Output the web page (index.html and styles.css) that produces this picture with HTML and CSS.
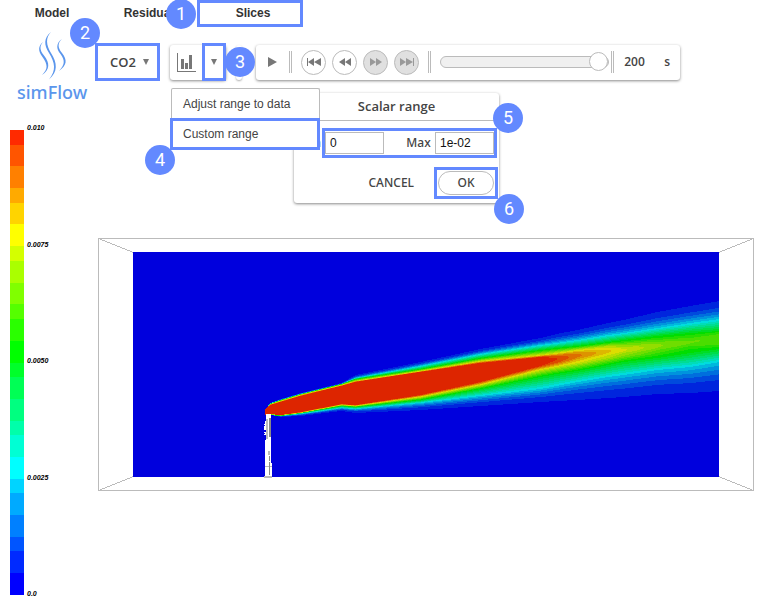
FILE: index.html
```html
<!DOCTYPE html>
<html lang="en">
<head>
<meta charset="utf-8">
<title>simFlow</title>
<link rel="stylesheet" href="styles.css">
</head>
<body>
<div class="app">
  <nav class="tabs">
    <a class="tab" href="#model">Model</a>
    <a class="tab" href="#residuals">Residuals</a>
    <a class="tab tab-current" href="#slices">Slices<span class="badge badge-1">1</span></a>
  </nav>

  <aside class="side">
    <div class="logo">
      <svg class="logo-mark" viewBox="0 0 30 48" aria-hidden="true">
        <path d="M13 0C5.500 6 6 13 11 21C17 31 18.500 38 11 47.500C20 40 19.500 31 13 21C8 12.500 7.500 6 13 0Z"/>
        <path d="M5 10C0 14 0 19 4.500 25C10 33 10 37 4 43C12 37.500 12 31 6 23.500C1.500 18 1.500 14 5 10Z"/>
        <path d="M24 7C18 11 18 17 22.500 22C27.500 29 26.500 33 21 39C29 33 29.500 28 24 21C19.500 15.500 19.500 11 24 7Z"/>
      </svg>
      <span class="logo-name">simFlow</span>
    </div>
    <div class="legend">
      <svg class="legend-bar" viewBox="0 0 14 465" preserveAspectRatio="none" shape-rendering="crispEdges" aria-hidden="true">
        <rect width="14" height="465" fill="#00f"/>
        <rect width="14" height="443" fill="#002aff"/>
        <rect width="14" height="421" fill="#0055ff"/>
        <rect width="14" height="407" fill="#0080ff"/>
        <rect width="14" height="385" fill="#00aaff"/>
        <rect width="14" height="363" fill="#00d4ff"/>
        <rect width="14" height="349" fill="#00ffff"/>
        <rect width="14" height="327" fill="#00ffd4"/>
        <rect width="14" height="305" fill="#00ffaa"/>
        <rect width="14" height="291" fill="#00ff80"/>
        <rect width="14" height="269" fill="#00ff55"/>
        <rect width="14" height="247" fill="#00ff2a"/>
        <rect width="14" height="233" fill="#00ff00"/>
        <rect width="14" height="211" fill="#2aff00"/>
        <rect width="14" height="189" fill="#55ff00"/>
        <rect width="14" height="174" fill="#80ff00"/>
        <rect width="14" height="153" fill="#aaff00"/>
        <rect width="14" height="131" fill="#d4ff00"/>
        <rect width="14" height="116" fill="#ffff00"/>
        <rect width="14" height="94" fill="#ffd400"/>
        <rect width="14" height="73" fill="#ffaa00"/>
        <rect width="14" height="58" fill="#ff8000"/>
        <rect width="14" height="36" fill="#ff5500"/>
        <rect width="14" height="15" fill="#ff2a00"/>
      </svg>
      <div class="legend-values">
        <span>0.010</span><span>0.0075</span><span>0.0050</span><span>0.0025</span><span>0.0</span>
      </div>
    </div>
  </aside>

  <main class="work">
    <div class="toolbar">
      <button class="field-button marked" type="button">CO2 <span class="arrow"></span><span class="badge badge-2">2</span></button>
      <div class="panel chart-group">
        <button class="chart-button" type="button" aria-label="Scalar bar">
          <svg width="19" height="19" viewBox="0 0 19 19" shape-rendering="crispEdges" aria-hidden="true">
            <path d="M0 0H1V18H19V19H0ZM4 6H7V16H4ZM8 10H11V16H8ZM12 2H15V16H12Z"/>
          </svg>
        </button>
        <button class="range-button marked" type="button" aria-label="Range options"><span class="arrow"></span></button>
      </div>
      <div class="grip"><span class="badge badge-3">3</span></div>
      <div class="panel player">
        <button class="play" type="button" aria-label="Play"><svg width="9" height="10" viewBox="0 0 9 10"><path d="M0 0L9 5L0 10Z"/></svg></button>
        <span class="rule"></span>
        <div class="steps">
          <button class="step" type="button" aria-label="First"><svg width="14" height="8" viewBox="0 0 14 8"><path d="M0 0H1V8H0ZM7 0V8L1 4ZM14 0V8L7 4Z"/></svg></button>
          <button class="step" type="button" aria-label="Previous"><svg width="12" height="8" viewBox="0 0 12 8"><path d="M6 0V8L0 4ZM12 0V8L6 4Z"/></svg></button>
          <button class="step step-off" type="button" aria-label="Next"><svg width="12" height="8" viewBox="0 0 12 8"><path d="M0 0V8L6 4ZM6 0V8L12 4Z"/></svg></button>
          <button class="step step-off" type="button" aria-label="Last"><svg width="14" height="8" viewBox="0 0 14 8"><path d="M0 0V8L6 4ZM6 0V8L13 4ZM13 0H14V8H13Z"/></svg></button>
        </div>
        <span class="rule"></span>
        <input class="timeline" type="range" min="0" max="200" value="200" aria-label="Time">
        <span class="rule"></span>
        <input class="time" id="time" type="text" value="200" aria-label="Time value">
        <label class="unit" for="time">s</label>
      </div>
    </div>

    <form class="dialog">
      <h2 class="dialog-title">Scalar range</h2>
      <div class="dialog-fields">
        <label for="min">Min</label>
        <div class="field-pair marked">
          <input class="number" id="min" type="text" value="0">
          <label for="max">Max</label>
          <input class="number" id="max" type="text" value="1e-02">
          <span class="badge badge-5">5</span>
        </div>
      </div>
      <div class="dialog-actions">
        <button class="cancel" type="button">CANCEL</button>
        <div class="ok-mark marked"><button class="ok" type="button">OK</button><span class="badge badge-6">6</span></div>
      </div>
    </form>

    <div class="menu">
      <button class="menu-item" type="button">Adjust range to data</button>
      <button class="menu-item marked" type="button">Custom range<span class="badge badge-4">4</span></button>
    </div>

    <svg class="scene" viewBox="98 238 656 253" shape-rendering="crispEdges" role="img" aria-label="CO2 concentration slice">
      <path class="wire" d="M98.500 238.500H753.500V490.500H98.500ZM98.500 238.500L133.500 252.500M753.500 238.500L718.500 252.500M98.500 490.500L133.500 476.500M753.500 490.500L718.500 476.500"/>
      <rect x="133" y="252" width="586" height="225" fill="#0000dd"/>
      <g id="plume"></g>
      <path fill="#fff" d="M266 414H271V463H272V477H265V440H266V435H264V432H266V430H264V424H265V421H266Z"/>
      <path fill="#bbb" d="M266 419H268V439H266ZM268 451H270V455H268ZM265 466H272V467H265ZM264 476H272V478H264Z"/>
      <path fill="#888" d="M269 418H271V437H269ZM269 456H270V461H269ZM269 462H270V475H269Z"/>
      <path fill="#0000dd" d="M264 425H265V426H264ZM264 433H265V434H264Z"/>
    </svg>
  </main>
</div>
<script src="plume.js"></script>
</body>
</html>
```

FILE: plume.js
```js
// Cross-sections of the plume. Each section is an x position followed by
// [y, level] points from the upper edge, through the core, to the lower edge.
const sections = [
  [265, [[409, 1], [409, 6], [409, 12], [409, 18], [409, 23], [412, 24], [415, 23], [415, 18], [415, 12], [415, 6], [415, 1]]],
  [270, [[403, 1], [403, 6], [404, 12], [404, 18], [405, 23], [409, 24], [414, 23], [414, 18], [415, 12], [415, 6], [415, 1]]],
  [280, [[399, 1], [400, 6], [400, 12], [401, 18], [402, 23], [409, 24], [415, 23], [415, 18], [416, 12], [416, 6], [417, 1]]],
  [300, [[393, 1], [394, 6], [394, 12], [395, 18], [396, 23], [404, 24], [412, 23], [413, 18], [413, 12], [414, 6], [416, 1]]],
  [341, [[383, 1], [384, 6], [384, 12], [385, 18], [386, 23], [395, 24], [404, 23], [405, 18], [406, 12], [408, 6], [411, 1]]],
  [355, [[375, 1], [378, 6], [379, 12], [381, 18], [382, 23], [393, 24], [405, 23], [406, 18], [407, 12], [409, 6], [413, 1]]],
  [420, [[362, 1], [366, 6], [369, 12], [371, 18], [372, 23], [383, 24], [395, 23], [397, 18], [400, 12], [403, 6], [410, 1]]],
  [480, [[349, 1], [354, 6], [358, 12], [361, 18], [363, 23], [372, 24], [382, 23], [385, 18], [389, 12], [396, 6], [406, 1]]],
  [540, [[338, 1], [345, 6], [350, 12], [355, 18], [357, 23], [361, 24], [366, 23], [370, 18], [377, 12], [389, 6], [402, 1]]],
  [556, [[334, 1], [343, 6], [348, 12], [353, 18], [356, 22], [359, 23.05], [363, 22], [367, 18], [374, 12], [386, 6], [401, 1]]],
  [577, [[330, 1], [340, 6], [346, 12], [350, 18], [352, 20], [356, 21.3], [359, 20], [363, 18], [371, 12], [382, 6], [400, 1]]],
  [608, [[323, 1], [335, 6], [342, 12], [346, 17], [348, 18], [351, 19.2], [355, 18], [358, 17], [365, 12], [377, 6], [398, 1]]],
  [623, [[320, 1], [333, 6], [340, 12], [345, 16], [347, 17], [350, 18.2], [353, 17], [356, 16], [362, 12], [375, 6], [397, 1]]],
  [657, [[312, 1], [328, 6], [336, 12], [340, 14], [342, 15], [346, 16.2], [350, 15], [353, 14], [358, 12], [370, 6], [394, 1]]],
  [690, [[306, 1], [323, 6], [333, 12], [335, 13], [338, 14], [342, 15.1], [346, 14], [349, 13], [353, 12], [367, 6], [393, 1]]],
  [719, [[301, 1], [319, 6], [331, 12], [332, 13], [334, 14], [338, 14.8], [345, 14], [347, 13], [349, 12], [362, 6], [391, 1]]]
];

function profileAt(x) {
  let i = 0;
  while (i < sections.length - 2 && sections[i + 1][0] < x) i++;
  const [xa, a] = sections[i];
  const [xb, b] = sections[i + 1];
  const t = (x - xa) / (xb - xa);
  return a.map((p, k) => [p[0] + (b[k][0] - p[0]) * t, p[1] + (b[k][1] - p[1]) * t]);
}

// The outermost levels spread out, and the core of the plume is rounded.
function crossing(outer, inner, level, isCore) {
  let t = (level - outer[1]) / (inner[1] - outer[1] || 1);
  if (outer[1] === 1) t = Math.pow(t, 0.6);
  if (isCore) t = 1 - Math.sqrt(1 - t);
  return outer[0] + (inner[0] - outer[0]) * t;
}

function spanAt(x, level) {
  const p = profileAt(x);
  const up = p.findIndex(q => q[1] >= level);
  if (up < 0) return null;
  let down = p.length - 1;
  while (p[down][1] < level) down--;
  const top = up === 0 ? p[0][0] : crossing(p[up - 1], p[up], level, up === 5);
  const bottom = down === p.length - 1 ? p[down][0] : crossing(p[down + 1], p[down], level, down === 5);
  return [Math.round(top), Math.round(bottom)];
}

function levelColor(level) {
  const s = Math.round(221 * (level % 6) / 6);
  if (level < 6) return `rgb(0,${s},221)`;
  if (level < 12) return `rgb(0,221,${221 - s})`;
  if (level < 18) return `rgb(${s},221,0)`;
  return `rgb(221,${Math.round(221 * (24 - level) / 6)},0)`;
}

const plume = document.getElementById("plume");
for (let level = 1; level <= 23; level++) {
  let d = "";
  for (let x = 265; x < 719; x++) {
    const span = spanAt(x, level);
    if (span && span[1] > span[0]) d += `M${x} ${span[0]}h1V${span[1]}h-1Z`;
  }
  const path = document.createElementNS("http://www.w3.org/2000/svg", "path");
  path.setAttribute("d", d);
  path.setAttribute("fill", levelColor(level));
  plume.appendChild(path);
}
```

FILE: styles.css
```css
* {
  box-sizing: border-box;
}

body {
  margin: 0;
  background: #fff;
  color: #444;
  font-family: "Liberation Sans", sans-serif;
  font-size: 12px;
}

button,
input {
  margin: 0;
  padding: 0;
  border: 0;
  background: none;
  color: inherit;
  font: inherit;
}

svg {
  display: block;
}

.app {
  display: grid;
  grid-template-columns: 95px 1fr;
  grid-template-rows: auto 1fr;
  min-height: 100vh;
}

.marked {
  position: relative;
  border: 3px solid #6389ff;
}

.badge {
  position: absolute;
  z-index: 5;
  display: grid;
  place-items: center;
  width: 30px;
  height: 30px;
  border-radius: 50%;
  background: #6389ff;
  color: #fff;
  font: 400 18px/30px Roboto, sans-serif;
}

/* Tabs */
.tabs {
  grid-column: 1 / -1;
  display: flex;
  height: 27px;
  padding-left: 2px;
}

.tab {
  width: 100px;
  color: #333;
  font-weight: 700;
  line-height: 26px;
  text-align: center;
  text-decoration: none;
}

.tab-current {
  position: relative;
  width: 106px;
  margin-left: -5px;
  border: 3px solid #6389ff;
  line-height: 20px;
  padding-left: 6px;
}

.badge-1 {
  top: -4px;
  left: -34px;
}

/* Logo and legend */
.side {
  display: flex;
  flex-direction: column;
  padding: 5px 0 7px 10px;
}

.logo {
  height: 98px;
  padding-left: 7px;
}

.logo-mark {
  width: 30px;
  height: 48px;
  margin-left: 21px;
  fill: #5b96ec;
}

.logo-name {
  display: block;
  color: #5b96ec;
  font: 500 18px/24px "Noto Sans", sans-serif;
}

.legend {
  display: flex;
  flex: 1;
  gap: 3px;
}

.legend-bar {
  width: 14px;
  height: 100%;
  min-height: 465px;
}

.legend-values {
  display: flex;
  flex-direction: column;
  justify-content: space-between;
  margin: -6px 0 -3px;
  color: #000;
  font: italic 700 7px/8px "Liberation Sans", sans-serif;
}

/* Toolbar */
.work {
  position: relative;
  padding: 16px 6px 0 0;
}

.toolbar {
  display: flex;
  align-items: center;
  height: 38px;
  margin-right: 74px;
}

.panel {
  display: flex;
  align-items: center;
  height: 35px;
  border-radius: 3px;
  background: #fff;
  box-shadow: 0 1px 3px #888;
}

.field-button {
  display: flex;
  align-items: center;
  justify-content: center;
  gap: 7px;
  width: 65px;
  height: 38px;
  padding-left: 4px;
  font: 600 13px/18px "Open Sans", sans-serif;
}

.arrow {
  border: 3px solid transparent;
  border-top: 6px solid #777;
  border-bottom: 0;
}

.badge-2 {
  top: -28px;
  left: -28px;
}

.chart-group {
  margin-left: 10px;
}

.chart-button {
  display: grid;
  place-items: center;
  width: 32px;
  height: 35px;
  fill: #777;
}

.range-button {
  display: grid;
  place-items: center;
  width: 24px;
  height: 38px;
}

.grip {
  position: relative;
  width: 6px;
  height: 35px;
  margin: 0 14px 0 10px;
  border-radius: 3px;
  box-shadow: 0 1px 2px #aaa;
}

.badge-3 {
  top: 2px;
  left: -11px;
}

.player {
  flex: 1;
  padding: 0 10px 0 12px;
}

.play {
  fill: #777;
  margin-right: 12px;
}

.rule {
  width: 3px;
  height: 22px;
  border: 1px solid #bbb;
  border-width: 0 1px;
}

.steps {
  display: flex;
  gap: 6px;
  margin: 0 9px;
}

.step {
  display: grid;
  place-items: center;
  width: 25px;
  height: 25px;
  border: 1px solid #bbb;
  border-radius: 50%;
  fill: #777;
}

.step-off {
  background: #e0e0e0;
  fill: #999;
}

.timeline {
  flex: 1;
  min-width: 0;
  height: 19px;
  margin: 0 2px 0 9px;
  appearance: none;
}

.timeline::-webkit-slider-runnable-track {
  height: 12px;
  border: 1px solid #bbb;
  border-radius: 6px;
  background: #f0f0f0;
}

.timeline::-webkit-slider-thumb {
  width: 19px;
  height: 19px;
  margin-top: -5px;
  border: 1px solid #bbb;
  border-radius: 50%;
  background: #fff;
  appearance: none;
}

.time {
  width: 40px;
  margin-left: 10px;
  font: 600 12px/18px "Open Sans", sans-serif;
}

.unit {
  font: 600 12px/18px "Open Sans", sans-serif;
}

/* Range menu */
.menu {
  position: absolute;
  z-index: 3;
  top: 61px;
  left: 76px;
  width: 149px;
  border: 1px solid #bbb;
  border-bottom: 0;
  border-radius: 2px;
  background: #fff;
}

.menu-item {
  display: block;
  width: 100%;
  height: 29px;
  padding-left: 11px;
  font-size: 12px;
  line-height: 28px;
  text-align: left;
}

.menu-item.marked {
  width: 150px;
  height: 32px;
  margin-left: -2px;
  padding-left: 10px;
  line-height: 26px;
}

.badge-4 {
  top: 24px;
  left: -28px;
}

/* Range dialog */
.dialog {
  position: absolute;
  z-index: 2;
  top: 66px;
  left: 199px;
  width: 205px;
  padding-bottom: 4px;
  border-radius: 3px;
  background: #fff;
  box-shadow: 0 1px 3px #888;
}

.dialog-title {
  margin: 0;
  border-bottom: 1px solid #bbb;
  font: 600 13px/27px "Open Sans", sans-serif;
  text-align: center;
}

.dialog-fields {
  display: flex;
  align-items: center;
  justify-content: flex-end;
  gap: 1px;
  padding: 7px 2px 9px 0;
  font: 500 12px/18px "Noto Sans", sans-serif;
}

.field-pair {
  display: flex;
  align-items: center;
  justify-content: space-between;
  width: 175px;
  height: 30px;
}

.field-pair label {
  margin-left: 18px;
}

.number {
  width: 59px;
  height: 22px;
  padding-left: 4px;
  border: 1px solid #bbb;
  color: #111;
  font: 12px/20px "Liberation Sans", sans-serif;
}

.badge-5 {
  top: -28px;
  right: -29px;
}

.dialog-actions {
  display: flex;
  align-items: center;
  justify-content: flex-end;
  gap: 20px;
  padding-right: 1px;
  font: 500 12px/18px "Noto Sans", sans-serif;
}

.ok-mark {
  width: 64px;
  height: 32px;
  padding: 1px;
}

.ok {
  display: block;
  width: 56px;
  height: 24px;
  border: 1px solid #bbb;
  border-radius: 12px;
}

.badge-6 {
  top: 24px;
  right: -29px;
}

/* Slice view */
.scene {
  width: calc(100% - 3px);
  margin: 157px 0 0 3px;
}

.wire {
  fill: none;
  stroke: #bbb;
}
```
